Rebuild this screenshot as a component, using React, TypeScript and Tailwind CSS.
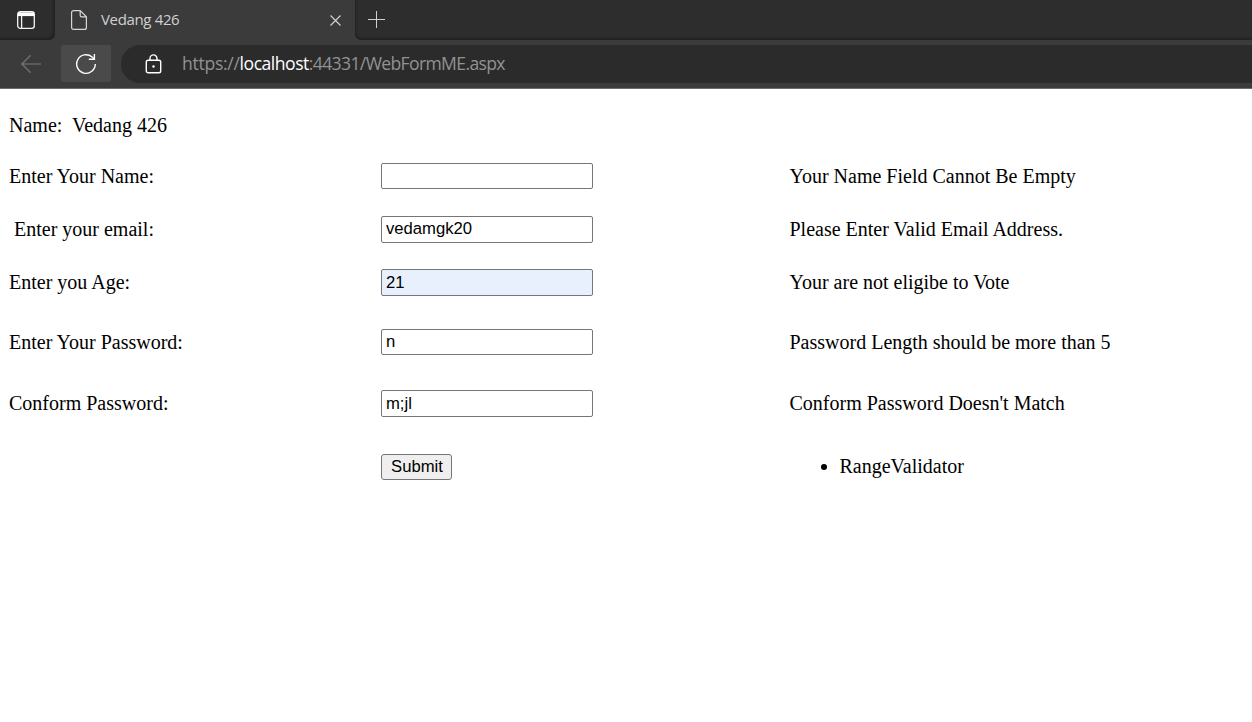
import React from "react";

type Row = {
  label: string;
  value: string;
  message: string;
  rowClass: string;
  textClass: string;
  inputClass: string;
};

const rows: Row[] = [
  { label: "Enter Your Name:", value: "", message: "Your Name Field Cannot Be Empty", rowClass: "h-[52px]", textClass: "", inputClass: "h-[26px] bg-white" },
  { label: "\u00a0Enter your email:", value: "vedamgk20", message: "Please Enter Valid Email Address.", rowClass: "h-[55px]", textClass: "pb-0.5", inputClass: "h-[27px] bg-white pb-0.5" },
  { label: "Enter you Age:", value: "21", message: "Your are not eligibe to Vote", rowClass: "h-[51px]", textClass: "pb-0.5", inputClass: "h-[27px] bg-[#e8f0fe]" },
  { label: "Enter Your Password:", value: "n", message: "Password Length should be more than 5", rowClass: "h-[68px]", textClass: "", inputClass: "h-[26px] bg-white" },
  { label: "Conform Password:", value: "m;jl", message: "Conform Password Doesn't Match", rowClass: "h-[55px]", textClass: "pb-0.5", inputClass: "h-[27px] bg-white" },
];

function TabStrip() {
  return (
    <div className="flex h-10 bg-[#3b3b3b]">
      <div className="flex w-[55px] items-center rounded-br-md bg-[#2d2d2d] pl-4 shadow-[inset_-2px_-2px_2px_#222]">
        <svg width="20" height="20" viewBox="0 0 20 20" fill="none" stroke="#f5f5f5" strokeWidth="1.3">
          <rect x="1.7" y="1.7" width="16.6" height="16.6" rx="2.6" />
          <path d="M2 2.3h16v3.8H2z" fill="#fff" stroke="none" />
          <path d="M5.6 5v13" />
        </svg>
      </div>
      <div className="flex w-[300px] items-center rounded-t-lg bg-[#3b3b3b]">
        <svg className="ml-4" width="16" height="20" viewBox="0 0 16 20" fill="none" stroke="#d6d6d6" strokeWidth="1.2">
          <path d="M2.6.6h6.6l6.2 6.2v10.6a2 2 0 0 1-2 2H2.6a2 2 0 0 1-2-2V2.6a2 2 0 0 1 2-2z" />
          <path d="M9.2.8v4.6a1.4 1.4 0 0 0 1.4 1.4h4.6" />
        </svg>
        <span className="ml-[14px] pb-0.5 text-[15px] leading-5 tracking-[-0.35px] text-[#d0d0d0]">Vedang 426</span>
        <svg className="mr-[14px] ml-auto" width="11" height="11" viewBox="0 0 11 11" stroke="#d0d0d0" strokeWidth="1.2">
          <path d="M.5.5l10 10M10.5.5l-10 10" />
        </svg>
      </div>
      <div className="flex flex-1 items-center rounded-bl-md bg-[#2d2d2d] pb-px pl-[13px] shadow-[inset_1px_-2px_2px_#222]">
        <svg width="17" height="17" viewBox="0 0 17 17" stroke="#d0d0d0" strokeWidth="1">
          <path d="M0 8.5h17M8.5 0v17" />
        </svg>
      </div>
    </div>
  );
}

function AddressBar() {
  return (
    <div className="flex h-[49px] items-center border-b border-[#6b6b6b] bg-[#3b3b3b] pb-px">
      <svg className="ml-[21px]" width="20" height="18" viewBox="0 0 20 18" fill="none" stroke="#7b7b7b" strokeWidth="1.2">
        <path d="M20 9H.8M9.6.4L.8 9l8.8 8.6" />
      </svg>
      <div className="ml-5 flex h-[37px] w-[50px] items-center justify-center rounded-[2px] bg-[#4a4a4a]">
        <svg width="22" height="22" viewBox="0 0 22 22" fill="none" stroke="#fff" strokeWidth="1.4">
          <path d="M20.3 11a9.3 9.3 0 1 1-3.2-7l2.2 2" />
          <path d="M19.4 1v5.2h-5.6" />
        </svg>
      </div>
      <div className="ml-[10px] flex h-[38px] flex-1 items-center rounded-l-full bg-[#2b2b2b]">
        <svg className="ml-6" width="17" height="20" viewBox="0 0 17 20" fill="none" stroke="#fff" strokeWidth="1.4">
          <rect x="1.3" y="6.3" width="14.4" height="12.4" rx="1.8" />
          <path d="M5 6V4.4a3.5 3.5 0 0 1 7 0V6" />
          <circle cx="8.5" cy="12.5" r="1.2" fill="#fff" stroke="none" />
        </svg>
        <span className="ml-[20px] whitespace-pre pb-0.5 text-[17.6px] leading-6 tracking-[-0.65px] text-[#929292]">
          <span className="tracking-[-0.3px]">https://</span><span className="tracking-[-0.5px] text-white">localhost</span>:44331/WebFormME.aspx
        </span>
      </div>
    </div>
  );
}

export default function App() {
  return (
    <div className="flex h-[722px] w-[1252px] flex-col overflow-hidden bg-white">
      <header className="font-['Open_Sans','Noto_Sans',sans-serif]">
        <TabStrip />
        <AddressBar />
      </header>
      <main className="pt-[13px] pl-[9px] font-['Liberation_Serif',serif] text-[20px] leading-6 text-black">
        <div className="flex h-12 items-center whitespace-pre pb-0.5">{"Name:\u00a0 Vedang 426"}</div>
        {rows.map((row) => (
          <div key={row.label} className={`grid grid-cols-[372px_408.5px_1fr] items-center ${row.rowClass}`}>
            <span className={row.textClass}>{row.label}</span>
            <input
              type="text"
              defaultValue={row.value}
              className={`w-[212px] rounded-[2px] border border-[#767676] px-1 font-['Liberation_Sans',sans-serif] text-[16.67px] text-black outline-none ${row.inputClass}`}
            />
            <span className={row.textClass}>{row.message}</span>
          </div>
        ))}
        <div className="grid h-[72px] grid-cols-[372px_408.5px_1fr] items-center">
          <span />
          <button className="h-[26px] w-[71px] rounded-[3px] border border-[#767676] bg-[#efefef] pl-px font-['Liberation_Sans',sans-serif] text-[16.67px] leading-[22px] text-black">
            Submit
          </button>
          <ul className="list-disc pb-0.5 pl-[50px]">
            <li>RangeValidator</li>
          </ul>
        </div>
      </main>
    </div>
  );
}
